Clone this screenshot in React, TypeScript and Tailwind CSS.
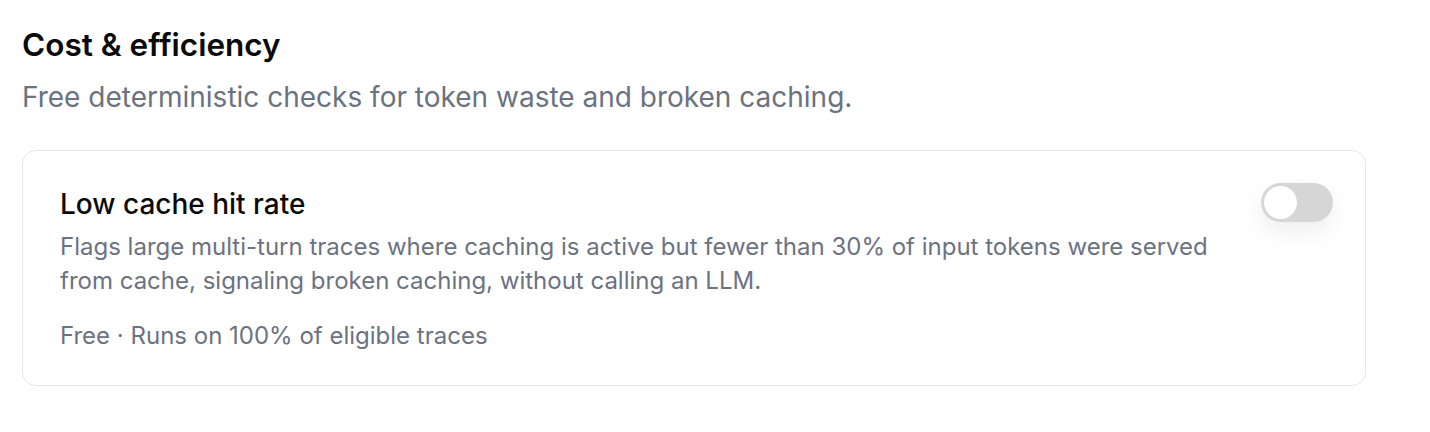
export default function App() {
  return (
    <div
      className="min-h-screen bg-white px-[22px] pt-[23px] text-[#0a0a0a]"
      style={{ fontFamily: 'Inter, "Noto Sans", sans-serif' }}
    >
      <div className="w-[1344px]">
        <h2 className="text-[31.5px] font-semibold leading-[44px]">Cost &amp; efficiency</h2>
        <p className="mt-[10px] text-[28px] leading-[40px] text-[#6b7280]">
          Free deterministic checks for token waste and broken caching.
        </p>

        {/* Check card */}
        <div className="mt-[33px] rounded-[14px] border border-[#e5e7eb] pt-[33px] pr-[32px] pb-[32px] pl-[37px]">
          <div className="flex items-start justify-between gap-[20px]">
            <div className="flex min-w-0 flex-1 flex-col">
              <h3 className="text-[28px] font-medium leading-[40px]">Low cache hit rate</h3>
              <p className="mt-[6px] text-[24px] leading-[34px] text-[#6b7280]">
                Flags large multi-turn traces where caching is active but fewer than 30% of input tokens were served
                from cache, signaling broken caching, without calling an LLM.
              </p>
              <p className="mt-[21px] text-[24px] leading-[34px] text-[#6b7280]">
                Free · Runs on 100% of eligible traces
              </p>
            </div>
            <button
              type="button"
              role="switch"
              aria-checked="false"
              className="mt-[-1px] flex h-[39px] w-[72px] shrink-0 items-center rounded-full bg-[#d6d6d6] p-[3px] shadow-[0_10px_24px_rgba(0,0,0,0.07)]"
            >
              <span className="h-[33px] w-[33px] rounded-full bg-white" />
            </button>
          </div>
        </div>
      </div>
    </div>
  );
}
